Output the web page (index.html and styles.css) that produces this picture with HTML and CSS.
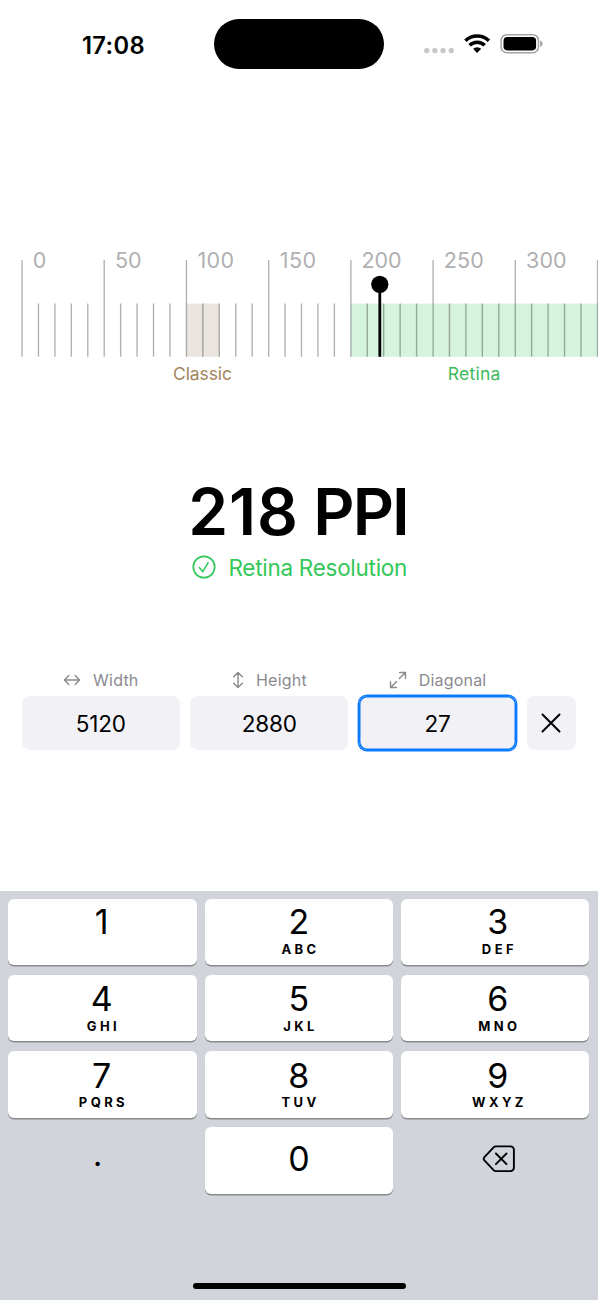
FILE: index.html
```
<!DOCTYPE html>
<html lang="en">
<head>
<meta charset="utf-8">
<title>PPI Calculator</title>
<link rel="stylesheet" href="styles.css">
</head>
<body>
<div class="phone">
  <header class="status">
    <div class="time">17:08</div>
    <div class="island"></div>
    <svg class="indicators" width="122" height="24" viewBox="0 0 122 24">
      <g fill="#c7c7c9"><circle cx="6.8" cy="18.6" r="2.7"/><circle cx="14.9" cy="18.6" r="2.7"/><circle cx="23.1" cy="18.6" r="2.7"/><circle cx="31.3" cy="18.6" r="2.7"/></g>
      <g fill="none" stroke="#000" stroke-width="3.6">
        <path d="M45.4 8.7a17.2 17.2 0 0 1 23.5 0"/>
        <path d="M49.6 13.3a10.9 10.9 0 0 1 15.1 0"/>
      </g>
      <path d="M53.1 16.8a6 6 0 0 1 8.1 0l-4.05 4.2z" fill="#000"/>
      <rect x="81.1" y="2.7" width="37.4" height="18" rx="5.8" fill="none" stroke="#a4a4a4" stroke-width="1.5"/>
      <rect x="83.5" y="5" width="32.6" height="13.4" rx="3.8" fill="#000"/>
      <path d="M120.1 8.6c1.6.7 2.5 1.8 2.5 3.1s-.9 2.4-2.5 3.1z" fill="#a4a4a4"/>
    </svg>
  </header>

  <svg class="ruler" width="598" height="150" viewBox="0 240 598 150">
    <rect x="186.5" y="303.6" width="33" height="53.2" fill="#eae6df"/>
    <rect x="351" y="303.6" width="247" height="53.2" fill="#d6f3de"/>
    <g class="ticks">
      <path d="M38.45 303.6v53.2m16.44-53.2v53.2m16.44-53.2v53.2m16.44-53.2v53.2m32.88-53.2v53.2m16.44-53.2v53.2m16.44-53.2v53.2m16.44-53.2v53.2m32.88-53.2v53.2m16.44-53.2v53.2m16.44-53.2v53.2m16.44-53.2v53.2m32.88-53.2v53.2m16.44-53.2v53.2m16.44-53.2v53.2m16.44-53.2v53.2m32.88-53.2v53.2m16.44-53.2v53.2m16.44-53.2v53.2m16.44-53.2v53.2m32.88-53.2v53.2m16.44-53.2v53.2m16.44-53.2v53.2m16.44-53.2v53.2m32.88-53.2v53.2m16.44-53.2v53.2m16.44-53.2v53.2m16.44-53.2v53.2"/>
      <path d="M22 260v96.8m82.22-96.8v96.8m82.22-96.8v96.8m82.22-96.8v96.8m82.22-96.8v96.8m82.22-96.8v96.8m82.22-96.8v96.8m82.22-96.8v96.8"/>
    </g>
    <g class="scale">
      <text x="32.7" y="267.8">0</text>
      <text x="115" y="267.8" textLength="26.5">50</text>
      <text x="197.4" y="267.8" textLength="36.8">100</text>
      <text x="279.7" y="267.8" textLength="36.3">150</text>
      <text x="361.5" y="267.8" textLength="40">200</text>
      <text x="443.8" y="267.8" textLength="40">250</text>
      <text x="526.1" y="267.8" textLength="40.5">300</text>
    </g>
    <path d="M379.8 284.3v72.5" stroke="#000" stroke-width="2.8"/>
    <circle cx="379.8" cy="284.3" r="8.6"/>
    <text class="zone" x="173" y="379.6" textLength="59" fill="#a2845e">Classic</text>
    <text class="zone" x="447.8" y="379.6" textLength="52.5" fill="#3dbb5c">Retina</text>
  </svg>

  <main class="result">
    <h1 class="ppi"><span class="value">218</span> PPI</h1>
    <div class="verdict">
      <svg width="24" height="24" viewBox="0 0 24 24" fill="none" stroke="#34c759" stroke-linecap="round" stroke-linejoin="round"><circle cx="12" cy="12" r="10.7" stroke-width="1.7"/><path d="M7.5 12.7l3.3 4 5.3-9" stroke-width="1.6"/></svg>
      <span>Retina Resolution</span>
    </div>
  </main>

  <form class="fields">
    <div class="field"><div class="label"><svg width="18" height="18" viewBox="0 0 18 18"><path d="M1.5 9h15M5.8 4.6L1.4 9l4.4 4.4M12.2 4.6L16.6 9l-4.4 4.4"/></svg><span>Width</span></div><div class="box">5120</div></div>
    <div class="field"><div class="label height"><svg width="18" height="18" viewBox="0 0 18 18"><path d="M9 1.5v15M4.6 5.8L9 1.4l4.4 4.4M4.6 12.2L9 16.6l4.4-4.4"/></svg><span>Height</span></div><div class="box">2880</div></div>
    <div class="field"><div class="label"><svg width="18" height="18" viewBox="0 0 18 18"><path d="M10.4 7.6l6-6M7.6 10.4l-6 6M10.6 1.5h5.9v5.9M1.5 10.6v5.9h5.9"/></svg><span>Diagonal</span></div><div class="box focused">27</div></div>
    <div class="clear"><svg width="20" height="20" viewBox="0 0 20 20"><path d="M1.5 1.5l17 17M18.5 1.5l-17 17" fill="none" stroke="#000" stroke-width="2" stroke-linecap="round"/></svg></div>
  </form>

  <section class="keyboard">
    <div class="keys">
      <div class="key left"><b>1</b></div>
      <div class="key"><b>2</b><i>ABC</i></div>
      <div class="key right"><b>3</b><i>DEF</i></div>
      <div class="key low left"><b>4</b><i>GHI</i></div>
      <div class="key low"><b>5</b><i>JKL</i></div>
      <div class="key low right"><b>6</b><i>MNO</i></div>
      <div class="key low left"><b>7</b><i>PQRS</i></div>
      <div class="key low"><b>8</b><i>TUV</i></div>
      <div class="key low right"><b>9</b><i>WXYZ</i></div>
      <div class="plain dot"><span>.</span></div>
      <div class="key zero"><b>0</b></div>
      <div class="plain delete"><svg width="34" height="28" viewBox="0 0 34 28" fill="none" stroke="#000" stroke-width="1.9" stroke-linecap="round" stroke-linejoin="round"><path d="M14 1.4h14.5a3.4 3.4 0 0 1 3.4 3.4v17.9a3.4 3.4 0 0 1-3.4 3.4H14c-1 0-1.7-.3-2.4-1L2.4 15.4c-1-1-1-2.3 0-3.3l9.2-9.7c.7-.7 1.4-1 2.4-1z"/><path d="M13.9 8.5l10.6 10.6M24.5 8.5L13.9 19.1"/></svg></div>
    </div>
    <div class="home"></div>
  </section>
</div>
</body>
</html>
```
FILE: styles.css
```
* { box-sizing: border-box; }
body { margin: 0; background: #fff; font-family: Inter, "Liberation Sans", sans-serif; color: #000; }
.phone { width: 598px; height: 1300px; display: flex; flex-direction: column; overflow: hidden; }

.status { height: 240px; flex: none; display: flex; align-items: flex-start; }
.time { width: 214px; padding: 31px 0 0 82px; font-size: 23.7px; line-height: 30px; font-weight: 600; letter-spacing: 0.35px; }
.island { width: 170px; height: 50px; margin-top: 19px; border-radius: 25px; background: #000; }
.indicators { margin: 32px 0 0 36px; overflow: visible; }

.ruler { display: block; flex: none; }
.ticks { fill: none; stroke: #000; stroke-opacity: .3; stroke-width: 1.4; }
.scale { font-size: 21.5px; fill: #b0b0b2; }
.zone { font-size: 17.5px; }

.result { height: 278px; flex: none; display: flex; flex-direction: column; align-items: center; padding-top: 82px; }
.ppi { margin: 0; padding-right: 2px; font-size: 64px; line-height: 80px; font-weight: 600; letter-spacing: -1.9px; white-space: nowrap; }
.value { letter-spacing: 1px; }
.verdict { display: flex; align-items: center; gap: 12.5px; height: 30px; font-size: 22.5px; letter-spacing: -.28px; color: #34c759; margin-top: 0; padding-left: 1px; white-space: nowrap; }

.fields { display: flex; align-items: flex-end; height: 82px; flex: none; padding-left: 22px; gap: 10.8px; }
.field { width: 157.6px; }
.label { display: flex; align-items: center; justify-content: center; gap: 12px; height: 24px; margin-bottom: 4px; font-size: 16px; letter-spacing: .2px; color: #8a8a8e; }
.label svg { fill: none; stroke: #8a8a8e; stroke-width: 1.4; stroke-linecap: round; stroke-linejoin: round; }
.height { gap: 9.5px; padding-right: 3px; }
.box { height: 54px; border-radius: 8px; background: #f2f1f6; display: flex; align-items: center; justify-content: center; font-size: 22.5px; letter-spacing: -.2px; }
.focused { box-shadow: 0 0 0 1.4px #0a7aff, inset 0 0 0 1.5px #0a7aff; }
.clear { width: 48.5px; height: 54px; border-radius: 8px; background: #f2f1f6; display: flex; align-items: center; justify-content: center; }

.keyboard { margin-top: 140.5px; height: 409.5px; flex: none; padding: 8.2px 8.4px 0; background: #d1d4db; display: flex; flex-direction: column; }
.keys { display: grid; grid-template-columns: repeat(3, 188.2px); grid-auto-rows: 66.6px; gap: 9.6px 8.2px; }
.key { background: #fff; border-radius: 6px; box-shadow: 0 1.4px 0 #898a8d; display: flex; flex-direction: column; align-items: center; }
.left { padding-right: 1.5px; }
.right { padding-left: 5px; }
.key b { font-size: 34px; line-height: 34px; font-weight: 400; padding-top: 6px; }
.key i { font-size: 13px; line-height: 14px; font-style: normal; font-weight: 700; letter-spacing: 3.4px; padding: 3.3px 0 0 3.4px; }
.low b { padding-top: 7.5px; }
.low i { padding-top: 2.3px; }
.zero b { padding-top: 15px; }
.plain { display: flex; align-items: center; justify-content: center; }
.dot { font-size: 32px; line-height: 34px; padding: 0 10px 11px 0; }
.delete { padding: 0 0 3px 8px; }
.home { width: 213px; height: 6.5px; margin: auto auto 11px; border-radius: 4px; background: #000; }
```
